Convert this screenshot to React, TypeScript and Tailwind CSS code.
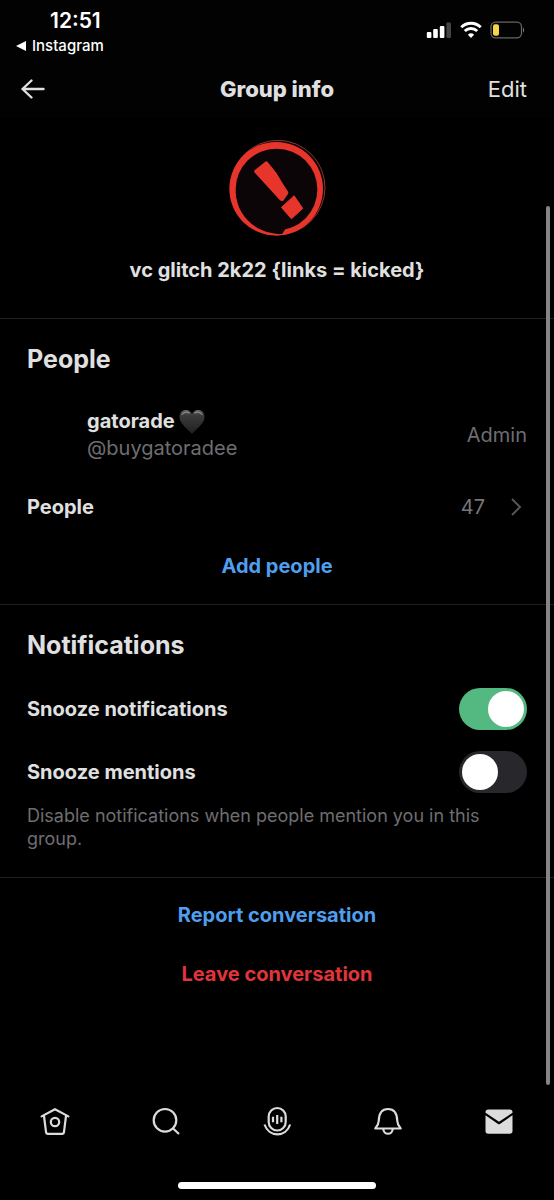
import React, { useState } from "react";

const navIcon = "h-8 w-8 fill-none stroke-[#dcdcdc] stroke-[2.2]";

const App: React.FC = () => {
    const [snoozeAll, setSnoozeAll] = useState(true);
    const [snoozeMentions, setSnoozeMentions] = useState(false);

    return (
        <div className="relative flex min-h-screen flex-col bg-black font-['Inter','Liberation_Sans',sans-serif] text-xl text-[#e0e0e0]">
            <header className="bg-[#020202]">
                <StatusBar />
                <div className="grid h-[58px] grid-cols-[1fr_auto_1fr] items-center px-[27px]">
                    <button aria-label="Back" className="-ml-2 w-8">
                        <svg
                            viewBox="0 0 32 32"
                            className="h-8 w-8 fill-none stroke-[#e0e0e0] stroke-[2.4]"
                            strokeLinecap="round"
                            strokeLinejoin="round"
                        >
                            <path d="M12.5 7.5 3.5 16l9 8.5M3.5 16h21" />
                        </svg>
                    </button>
                    <h1 className="text-[22px] font-extrabold">Group info</h1>
                    <button className="justify-self-end text-[22px]">
                        Edit
                    </button>
                </div>
            </header>

            <main className="flex-1">
                <section className="flex flex-col items-center border-b border-[#202020] px-[27px] pt-[21px] pb-8">
                    <GroupAvatar />
                    <h2 className="mt-[18px] text-xl leading-8 font-bold">
                        vc glitch 2k22 {"{links = kicked}"}
                    </h2>
                </section>

                <section className="border-b border-[#202020] px-[27px] pt-6 pb-[22px]">
                    <h2 className="text-[25px] leading-8 font-bold">People</h2>
                    <div className="mt-[33px] flex items-center justify-between pl-[60px]">
                        <div className="leading-[27px]">
                            <p className="flex items-center gap-1 font-bold">
                                gatorade
                                <BlackHeart />
                            </p>
                            <p className="text-[#6e6e72]">@buygatoradee</p>
                        </div>
                        <span className="text-[#6e6e72]">Admin</span>
                    </div>
                    <button className="mt-[29px] flex h-8 w-full items-center justify-between">
                        <span className="font-bold">People</span>
                        <span className="flex items-center gap-6 text-[#77777a]">
                            47
                            <svg
                                viewBox="0 0 18 20"
                                className="h-5 w-[18px] fill-none stroke-[#55555a] stroke-2"
                            >
                                <path d="m3 2 8 8-8 8" />
                            </svg>
                        </span>
                    </button>
                    <button className="mt-[27px] h-8 w-full font-bold text-[#4f9fee]">
                        Add people
                    </button>
                </section>

                <section className="border-b border-[#202020] px-[27px] pt-6 pb-[27px]">
                    <h2 className="text-[25px] leading-8 font-bold">
                        Notifications
                    </h2>
                    <div className="mt-[27px] flex flex-col gap-[21px]">
                        <Toggle
                            label="Snooze notifications"
                            checked={snoozeAll}
                            onChange={setSnoozeAll}
                        />
                        <Toggle
                            label="Snooze mentions"
                            checked={snoozeMentions}
                            onChange={setSnoozeMentions}
                        />
                    </div>
                    <p className="mt-[11px] text-lg leading-[23px] text-[#6e6e72]">
                        Disable notifications when people mention you in this
                        group.
                    </p>
                </section>

                <section className="flex flex-col gap-[27px] px-[27px] py-[21px]">
                    <button className="h-8 font-bold text-[#4f9fee]">
                        Report conversation
                    </button>
                    <button className="h-8 font-bold text-[#e0353b]">
                        Leave conversation
                    </button>
                </section>
            </main>

            <BottomNav />

            {/* scroll indicator */}
            <div className="absolute top-[206px] right-1 bottom-[115px] w-1 rounded-full bg-[#858585]" />
        </div>
    );
};

const StatusBar: React.FC = () => (
    <div className="flex h-[60px] items-start justify-between pr-[28px] pl-4 text-white">
        <div className="pt-[9px]">
            <p className="pl-[34px] text-[21px] leading-6 font-semibold">
                12:51
            </p>
            <a
                href="#instagram"
                className="flex items-center gap-[6px] text-[15px] leading-[26px] font-medium"
            >
                <svg viewBox="0 0 10 10" className="h-[10px] w-[10px] fill-white">
                    <path d="M0 5 10 0v10z" />
                </svg>
                Instagram
            </a>
        </div>
        <div className="flex items-center gap-2 pt-[21px]">
            <svg viewBox="0 0 26 18" className="h-[18px] w-[26px] fill-white">
                <rect x="0.8" y="11" width="4.6" height="6" rx="1" />
                <rect x="7.2" y="8" width="4.6" height="9" rx="1" />
                <rect x="13.8" y="5" width="4.6" height="12" rx="1" />
                <rect
                    x="20.4"
                    y="1.5"
                    width="4.6"
                    height="15.5"
                    rx="1"
                    className="fill-[#444]"
                />
            </svg>
            <svg
                viewBox="0 0 22 18"
                className="h-[18px] w-[22px] fill-none stroke-white"
                strokeWidth="2.9"
            >
                <path d="M1.3 6.3a13.8 13.8 0 0 1 19.4 0" />
                <path d="M4.8 10a8.8 8.8 0 0 1 12.4 0" />
                <path
                    d="M11 17 7.9 13.7a4.5 4.5 0 0 1 6.2 0z"
                    className="fill-white stroke-none"
                />
            </svg>
            <svg viewBox="0 0 36 18" className="h-[18px] w-[36px]">
                <rect
                    x="1"
                    y="1.2"
                    width="30.5"
                    height="15.6"
                    rx="4.6"
                    className="fill-none stroke-[#666]"
                    strokeWidth="1.3"
                />
                <rect
                    x="3"
                    y="3.2"
                    width="6"
                    height="11.6"
                    rx="2"
                    className="fill-[#f7d548]"
                />
                <path d="M33 6.2q2.4 2.8 0 5.6z" className="fill-[#777]" />
            </svg>
        </div>
    </div>
);

const GroupAvatar: React.FC = () => (
    <svg
        viewBox="36 26 292 292"
        className="h-[97px] w-[97px]"
        role="img"
        aria-label="Group avatar"
    >
        <circle
            cx="183"
            cy="172"
            r="142"
            className="fill-[#0b0304] stroke-[#8a3532]"
            strokeWidth="3"
        />
        <circle cx="178" cy="176" r="141" className="fill-[#e8352c]" />
        <circle cx="179" cy="178" r="123" className="fill-[#0b0508]" />
        {/* the ring thins out along its lower left */}
        <path
            d="M56 185C60 262 120 312 196 312L205 298 100 240z"
            className="fill-[#0b0508]"
        />
        <path
            d="M113 120 146 94q4-2 7 2l26 32q19 33 35 57 2 5-3 10l-11 16q-5 4-12-2L113 127q-3-4 0-7z"
            className="fill-[#e8352c]"
        />
        <path
            d="m232 197 26 38-34 31-30-34z"
            className="fill-[#e8352c] stroke-[#e8352c]"
            strokeWidth="3"
            strokeLinejoin="round"
        />
    </svg>
);

const BlackHeart: React.FC = () => (
    <svg
        viewBox="0 0 26 26"
        className="h-[26px] w-[26px]"
        role="img"
        aria-label="black heart"
    >
        <defs>
            <linearGradient id="heart" x1="0" y1="0" x2="0" y2="1">
                <stop offset="0" stopColor="#686868" />
                <stop offset="0.2" stopColor="#3c3c3c" />
                <stop offset="1" stopColor="#1f1f1f" />
            </linearGradient>
        </defs>
        <path
            d="M13 25C9 20 .5 15 .5 7.7.5 3.5 3.5 1 7 1c3 0 5 1.8 6 4.2C14 2.8 16 1 19 1c3.5 0 6.5 2.5 6.5 6.7C25.5 15 17 20 13 25z"
            fill="url(#heart)"
        />
        <path
            d="M3 5.5Q6 1.5 10 4M16 4q4-2.5 7 1.5"
            className="fill-none stroke-[#8c8c8c]"
            strokeWidth="1.2"
            strokeLinecap="round"
        />
    </svg>
);

interface ToggleProps {
    label: string;
    checked: boolean;
    onChange: (value: boolean) => void;
}

const Toggle: React.FC<ToggleProps> = ({ label, checked, onChange }) => (
    <label className="flex items-center justify-between font-bold">
        {label}
        <input
            type="checkbox"
            role="switch"
            checked={checked}
            onChange={(e) => onChange(e.target.checked)}
            className="flex h-[42px] w-[68px] cursor-pointer appearance-none items-center rounded-full bg-[#28272c] px-[3px] before:h-9 before:w-9 before:rounded-full before:bg-white before:content-[''] checked:justify-end checked:bg-[#54b881]"
        />
    </label>
);

const BottomNav: React.FC = () => (
    <footer className="flex flex-col items-center gap-11 pb-[11px]">
        <nav className="grid w-full grid-cols-5 justify-items-center">
            <a href="#home" aria-label="Home">
                <svg
                    viewBox="0 0 32 32"
                    className={navIcon}
                    strokeLinecap="round"
                    strokeLinejoin="round"
                >
                    <path d="M2.6 10.4 16 3.2l13.4 7.2" />
                    <path d="M5 10 7 25.8q.2 2 2 2h14q1.800 0 2-2L27 10" />
                    <circle cx="16" cy="16" r="4.2" />
                </svg>
            </a>
            <a href="#search" aria-label="Search">
                <svg viewBox="0 0 32 32" className={navIcon}>
                    <circle cx="15" cy="14.3" r="11.3" />
                    <path d="m22.8 22.2 6.2 5.8" />
                </svg>
            </a>
            <a href="#spaces" aria-label="Spaces">
                <svg viewBox="0 0 32 32" className={navIcon}>
                    <rect x="7.7" y="2" width="17" height="22.5" rx="8.5" />
                    <path d="M12 10.7v5.6M16.2 9v9M20.4 10.7v5.6" />
                    <path d="M3.5 18.5c4.5 13.2 21.5 13.2 25.6 0" />
                </svg>
            </a>
            <a href="#notifications" aria-label="Notifications">
                <svg
                    viewBox="0 0 32 32"
                    className={navIcon}
                    strokeLinejoin="round"
                >
                    <path d="M3.3 22.5c2-2.2 3.3-4.5 3.5-8C7 7 10 3 16 3s9 4 9.2 11.5c.2 3.5 1.5 5.8 3.5 8z" />
                    <path d="M11.2 22.5c.4 7 9.2 7 9.6 0" />
                </svg>
            </a>
            <a href="#messages" aria-label="Messages">
                <svg viewBox="0 0 32 32" className="h-8 w-8 fill-[#dcdcdc]">
                    <path d="M2.5 6.2q0-2.7 2.7-2.7h21.6q2.7 0 2.7 2.7v.6L16 15.8 2.5 6.8z" />
                    <path d="m2.5 9.2 12.6 8.7q.9.5 1.8 0l12.6-8.7v15.9q0 2.7-2.7 2.7H5.2q-2.700 0-2.700-2.700z" />
                </svg>
            </a>
        </nav>
        <div className="h-[7px] w-[198px] rounded-full bg-white" />
    </footer>
);

export default App;
